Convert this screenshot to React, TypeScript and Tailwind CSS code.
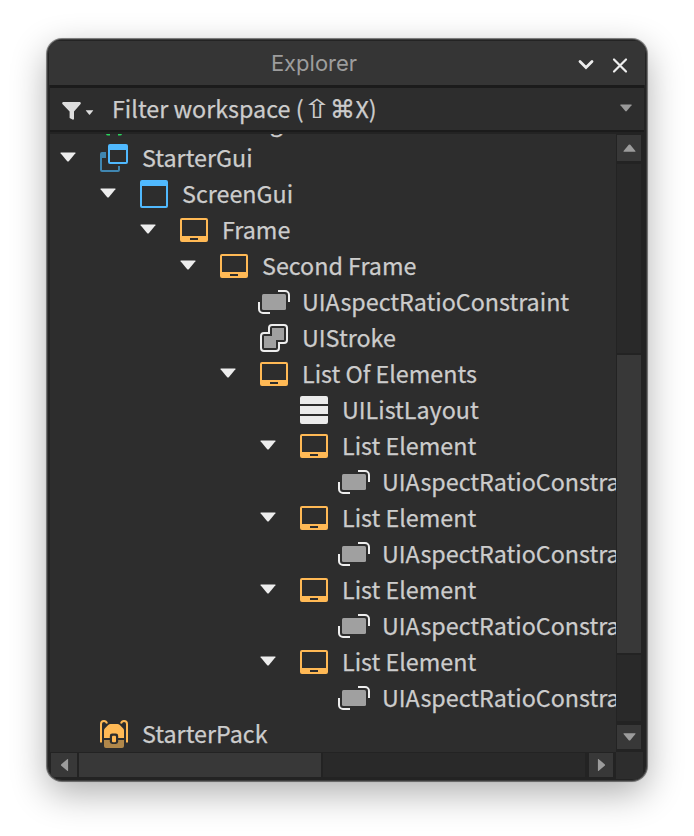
import React from "react";

type Kind = "storage" | "startergui" | "screengui" | "frame" | "aspect" | "stroke" | "list" | "pack";

interface Node {
  label: string;
  level: number;
  kind: Kind;
  open?: boolean;
}

const nodes: Node[] = [
  { label: "ServerStorage", level: 0, kind: "storage" },
  { label: "StarterGui", level: 0, kind: "startergui", open: true },
  { label: "ScreenGui", level: 1, kind: "screengui", open: true },
  { label: "Frame", level: 2, kind: "frame", open: true },
  { label: "Second Frame", level: 3, kind: "frame", open: true },
  { label: "UIAspectRatioConstraint", level: 4, kind: "aspect" },
  { label: "UIStroke", level: 4, kind: "stroke" },
  { label: "List Of Elements", level: 4, kind: "frame", open: true },
  { label: "UIListLayout", level: 5, kind: "list" },
  { label: "List Element", level: 5, kind: "frame", open: true },
  { label: "UIAspectRatioConstraint", level: 6, kind: "aspect" },
  { label: "List Element", level: 5, kind: "frame", open: true },
  { label: "UIAspectRatioConstraint", level: 6, kind: "aspect" },
  { label: "List Element", level: 5, kind: "frame", open: true },
  { label: "UIAspectRatioConstraint", level: 6, kind: "aspect" },
  { label: "List Element", level: 5, kind: "frame", open: true },
  { label: "UIAspectRatioConstraint", level: 6, kind: "aspect" },
  { label: "StarterPack", level: 0, kind: "pack" },
];

function NodeIcon({ kind }: { kind: Kind }) {
  return (
    <svg className="h-7 w-7 shrink-0 overflow-visible" viewBox="0 0 28 28" fill="none">
      {kind === "storage" && (
        <path d="M6 22h4v5.600H8q-2 0-2-2zM18 22h4v3.600q0 2-2 2h-2z" fill="#2bd45f" />
      )}
      {kind === "startergui" && (
        <>
          <path d="M6 8H2a2 2 0 0 0-2 2v16a2 2 0 0 0 2 2h16a2 2 0 0 0 2-2v-4h-2v4H2V14h4z" fill="#4086b0" />
          <path fillRule="evenodd" d="M10 0h16a2 2 0 0 1 2 2v16a2 2 0 0 1-2 2H10a2 2 0 0 1-2-2V2a2 2 0 0 1 2-2zM10 6v12h16V6z" fill="#50b9fe" />
        </>
      )}
      {kind === "screengui" && (
        <path fillRule="evenodd" d="M2 0h24a2 2 0 0 1 2 2v24a2 2 0 0 1-2 2H2a2 2 0 0 1-2-2V2a2 2 0 0 1 2-2zM2 6v20h24V6z" fill="#50b9fe" />
      )}
      {kind === "frame" && (
        <path fillRule="evenodd" d="M2 2h24a2 2 0 0 1 2 2v20a2 2 0 0 1-2 2H2a2 2 0 0 1-2-2V4a2 2 0 0 1 2-2zM2 4v16h24V4zM10 22v2h8v-2z" fill="#ffb955" />
      )}
      {kind === "aspect" && (
        <>
          <rect x="2" y="6" width="24" height="16" rx="1.5" fill="#a0a0a0" />
          <path d="M18 3h7a4 4 0 0 1 4 4v7M10 25H3a4 4 0 0 1-4-4v-7" stroke="#ededed" strokeWidth="2" />
        </>
      )}
      {kind === "stroke" && (
        <>
          <path d="M12 1h12a3 3 0 0 1 3 3v12a3 3 0 0 1-3 3h-5v5a3 3 0 0 1-3 3H4a3 3 0 0 1-3-3V12a3 3 0 0 1 3-3h5V4a3 3 0 0 1 3-3z" stroke="#ededed" strokeWidth="2" />
          <path d="M12 4h12v12h-8v8H4V12h8z" fill="#a0a0a0" />
        </>
      )}
      {kind === "list" && (
        <path d="M2 0h24a2 2 0 0 1 2 2v6H0V2a2 2 0 0 1 2-2zM0 10h28v8H0zM0 20h28v6a2 2 0 0 1-2 2H2a2 2 0 0 1-2-2z" fill="#ebebeb" />
      )}
      {kind === "pack" && (
        <>
          <path d="M1 22.500V4a3 3 0 0 1 3-3q2.200 0 3 2.500M27 22.500V4a3 3 0 0 0-3-3q-2.200 0-3 2.500" stroke="#ffb955" strokeWidth="2" />
          <path d="M4 18v-7.500q0-1.200 1-2.200l3.200-3.200Q9.300 4 10.500 4h7q1.200 0 2.300 1.100L23 8.300q1 1 1 2.200V18z" fill="#ffb955" />
          <path d="M4 20h20v6a2 2 0 0 1-2 2H6a2 2 0 0 1-2-2z" fill="#b0874a" />
          <rect x="9.800" y="13.600" width="8.400" height="10.400" rx="2.400" fill="#2d2d2d" />
          <rect x="12" y="15.800" width="4" height="6.400" rx="1" fill="#ffb955" />
        </>
      )}
    </svg>
  );
}

function Triangle({ className }: { className: string }) {
  return (
    <svg className={className} viewBox="0 0 16 10">
      <path d="M1 .4h14q.9 0 .4.800L9 9q-1 1-2 0L.6 1.200Q.1.4 1 .4z" fill="currentColor" />
    </svg>
  );
}

function TreeRow({ node }: { node: Node }) {
  return (
    <div className="flex h-9 shrink-0 items-center" style={{ paddingLeft: 10 + node.level * 40 }}>
      <div className="mr-6 w-4 shrink-0 pb-[3px]">
        {node.open && <Triangle className="h-2.5 w-4 text-[#ededed]" />}
      </div>
      <NodeIcon kind={node.kind} />
      <span className="mb-0.5 ml-3.5 whitespace-nowrap">{node.label}</span>
    </div>
  );
}

export default function App() {
  return (
    <div className="h-[836px] w-[694px] overflow-hidden bg-white pl-[47px] pt-[39px] font-['Noto_Sans_CJK_SC',sans-serif] text-[23.3px] leading-9 text-[#cccccc] [-webkit-text-stroke:0.25px]">
      <div className="flex h-[742px] w-[600px] flex-col overflow-hidden rounded-[15px] border border-[#3c3c3c] bg-[#232323] shadow-[0_0_0_1px_rgba(0,0,0,0.4),0_0_2px_rgba(0,0,0,0.4),0_12px_36px_rgba(0,0,0,0.32)]">
        <header className="mx-px flex h-[45px] shrink-0 items-center border-t border-[#232323] bg-[#353535] pr-[15px]">
          <h1 className="flex-1 pl-[3px] text-center font-[Inter,sans-serif] text-[22px] text-[#9d9d9d] [-webkit-text-stroke:0px]">
            Explorer
          </h1>
          <div className="mt-1 flex gap-3.5">
            <svg className="h-5 w-5" viewBox="0 0 20 20" fill="none" stroke="#ededed">
              <path d="M4 6.500l6 6 6-6" strokeWidth="2.800" strokeLinecap="round" />
            </svg>
            <svg className="h-5 w-5" viewBox="0 0 20 20" fill="none" stroke="#ededed">
              <path d="M4 4.500l12 12M16 4.500l-12 12" strokeWidth="2.200" strokeLinecap="round" />
            </svg>
          </div>
        </header>

        <div className="mx-0.5 flex h-[47px] shrink-0 items-center border-b-2 border-t-[3px] border-[#1b1b1b] bg-[#2d2d2d]">
          <svg className="ml-3 mt-[3px] h-[18px] w-[19px]" viewBox="0 0 19 18" fill="#dddddd">
            <path d="M1 0h17q1.200.6.6 2L12 9.500V17q-.5 1-1.500.6L7.600 16V9.500L.4 2Q-.2.6 1 0z" />
          </svg>
          <Triangle className="ml-1 mt-[7px] h-[5px] w-[9px] text-[#dddddd]" />
          <span className="mb-0.5 ml-[18px] flex items-center whitespace-pre">
            Filter workspace (
            <span className="flex w-[26px] justify-center pt-0.5 font-['DejaVu_Sans',sans-serif] [-webkit-text-stroke:0px]">
              <span className="inline-block scale-x-[1.35] text-[26px] leading-9">⇧</span>
            </span>
            <span className="flex w-[26px] justify-center pt-[3px] font-['DejaVu_Sans',sans-serif] text-[25px]">⌘</span>X)
          </span>
          <Triangle className="mb-0.5 ml-auto mr-3 h-2 w-3 text-[#999999]" />
        </div>

        <div className="flex h-[620px] shrink-0">
          <main className="ml-0.5 mt-0.5 flex w-[566px] shrink-0 flex-col justify-end overflow-hidden bg-[#2d2d2d]">
            {nodes.map((n, i) => (
              <TreeRow key={i} node={n} />
            ))}
          </main>
          <aside className="ml-px mt-[3px] flex w-6 flex-col">
            <div className="flex h-[26px] shrink-0 items-center justify-center bg-[#383838]">
              <Triangle className="h-2 w-[13px] rotate-180 text-[#9c9c9c]" />
            </div>
            <div className="mt-[3px] h-[189px] shrink-0 bg-[#292929]" />
            <div className="mt-0.5 h-[298px] shrink-0 bg-[#383838]" />
            <div className="mt-0.5 h-[66px] shrink-0 bg-[#292929]" />
            <div className="mt-1 flex h-6 shrink-0 items-center justify-center bg-[#383838]">
              <Triangle className="h-2 w-[13px] text-[#9c9c9c]" />
            </div>
          </aside>
        </div>

        <footer className="flex flex-1 pl-[3px]">
          <div className="mt-px flex h-6 w-[26px] items-center justify-center bg-[#383838]">
            <Triangle className="h-2 w-[13px] rotate-90 text-[#9c9c9c]" />
          </div>
          <div className="ml-0.5 mt-px h-6 w-[242px] bg-[#383838]" />
          <div className="ml-0.5 mt-px h-6 w-[262px] bg-[#292929]" />
          <div className="ml-1 mt-px flex h-6 w-6 items-center justify-center bg-[#383838]">
            <Triangle className="h-2 w-[13px] -rotate-90 text-[#9c9c9c]" />
          </div>
          <div className="ml-[3px] h-[27px] w-[27px] bg-[#2d2d2d]" />
        </footer>
      </div>
    </div>
  );
}
